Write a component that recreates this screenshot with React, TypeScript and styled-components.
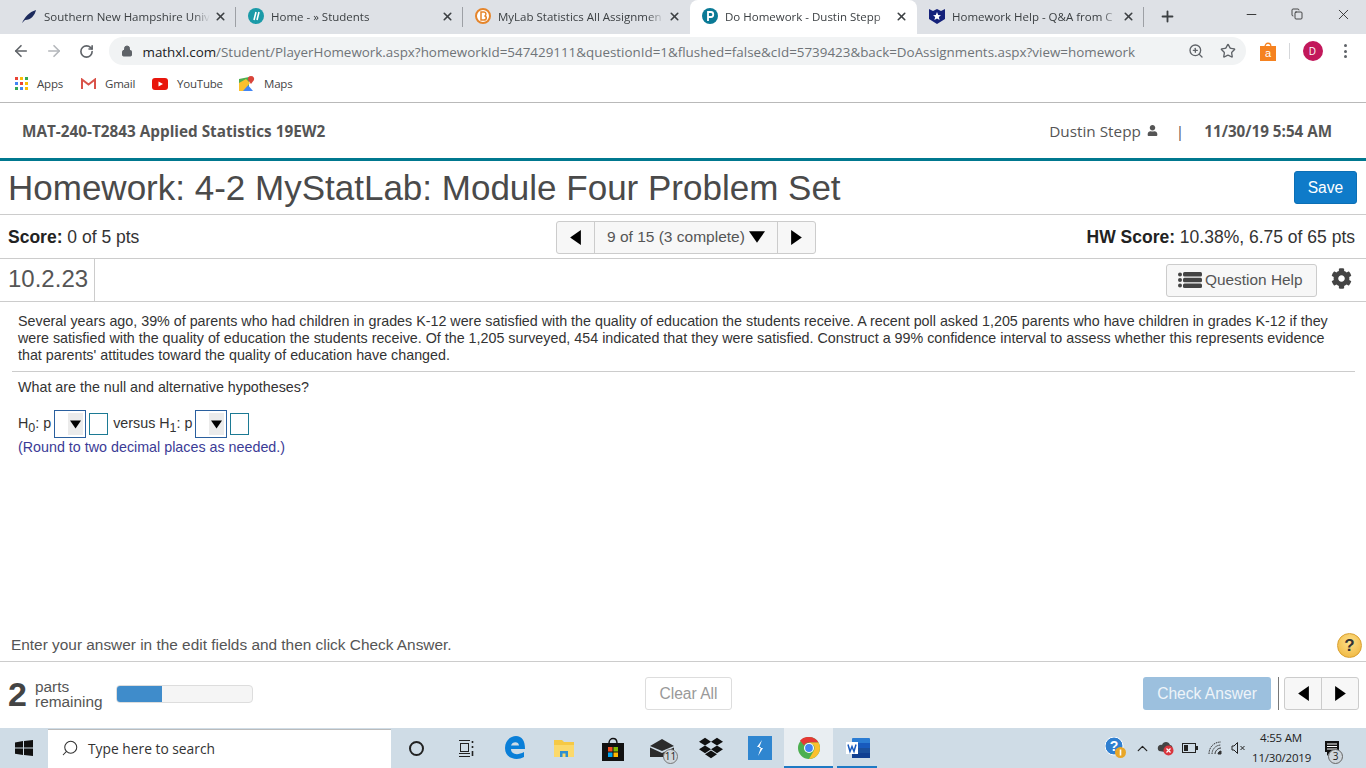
import React from 'react';
import styled, { createGlobalStyle } from 'styled-components';
import { ArrowLeft, ArrowRight, RotateCw, Lock, ZoomIn, Star, X, Plus, Minus, Copy, ChevronUp, Search } from 'lucide-react';
import { FaUser, FaCog, FaDropbox } from 'react-icons/fa';

const GlobalStyle = createGlobalStyle`
  html, body { margin: 0; padding: 0; background: #fff; }
  body { width: 1366px; height: 768px; overflow: hidden; font-family: "Liberation Sans", Arial, sans-serif; }
  * { box-sizing: border-box; }
`;

const Triangle = ({ dir, size = 15 }: { dir: 'left' | 'right' | 'down'; size?: number }) => {
  const pts = dir === 'left' ? '12,0 12,14 2,7' : dir === 'right' ? '2,0 2,14 12,7' : '0,2 14,2 7,12';
  return (
    <svg width={size} height={size} viewBox="0 0 14 14" fill="#000">
      <polygon points={pts} />
    </svg>
  );
};

const tabs = [
  { title: 'Southern New Hampshire Univ', icon: 'quill', sep: true },
  { title: 'Home - » Students', icon: 'home', sep: true },
  { title: 'MyLab Statistics All Assignmen', icon: 'brightspace' },
  { title: 'Do Homework - Dustin Stepp', icon: 'pearson', active: true },
  { title: 'Homework Help - Q&A from C', icon: 'shield', sep: true },
];

const Favicon = ({ kind }: { kind: string }) => {
  if (kind === 'quill')
    return (
      <svg width="16" height="16" viewBox="0 0 16 16">
        <path d="M1 15 C4 9 8 4 15 2 C14 7 10 12 4 12 L1 15Z" fill="#1c2a5c" />
      </svg>
    );
  if (kind === 'home')
    return (
      <svg width="16" height="16" viewBox="0 0 16 16">
        <circle cx="8" cy="8" r="8" fill="#1a9aa8" />
        <path d="M6 12 L8 4 M9 12 L11 4" stroke="#fff" strokeWidth="1.6" />
      </svg>
    );
  if (kind === 'brightspace')
    return (
      <svg width="16" height="16" viewBox="0 0 16 16">
        <circle cx="8" cy="8" r="7" fill="#fff" stroke="#e5852b" strokeWidth="2" />
        <path d="M6 4 H9 C11.5 4 11.5 7.6 9.5 8 C12 8.4 12 12 9 12 H6 Z" fill="none" stroke="#e5852b" strokeWidth="1.5" />
      </svg>
    );
  if (kind === 'pearson')
    return (
      <svg width="16" height="16" viewBox="0 0 16 16">
        <circle cx="8" cy="8" r="8" fill="#0a7a96" />
        <path d="M6 13 V4 H9 C12 4 12 9 9 9 H6" fill="none" stroke="#fff" strokeWidth="1.8" />
      </svg>
    );
  return (
    <svg width="16" height="16" viewBox="0 0 16 16">
      <path d="M0 1 L4 3 L8 1 L12 3 L16 1 V11 L8 16 L0 11Z" fill="#14217a" />
      <polygon points="8,4 9.2,7 12,7.2 9.8,9 10.6,12 8,10.4 5.4,12 6.2,9 4,7.2 6.8,7" fill="#fff" />
    </svg>
  );
};

const AppsGrid = () => {
  const colors = ['#ea4335', '#fbbc05', '#34a853', '#4285f4', '#ea4335', '#fbbc05', '#34a853', '#4285f4', '#fbbc05'];
  return (
    <svg width="13" height="13" viewBox="0 0 13 13">
      {colors.map((c, i) => (
        <rect key={i} x={(i % 3) * 5} y={Math.floor(i / 3) * 5} width="3" height="3" fill={c} />
      ))}
    </svg>
  );
};

const GmailIcon = () => (
  <svg width="15" height="12" viewBox="0 0 15 12">
    <path d="M1 11 V1.5 L7.5 6.5 L14 1.5 V11" fill="none" stroke="#d9534a" strokeWidth="2" />
  </svg>
);

const YoutubeIcon = () => (
  <svg width="16" height="12" viewBox="0 0 16 12">
    <rect width="16" height="12" rx="3" fill="#e8160c" />
    <polygon points="6.5,3.4 11,6 6.5,8.6" fill="#fff" />
  </svg>
);

const MapsIcon = () => (
  <svg width="16" height="16" viewBox="0 0 16 16">
    <path d="M0 3 L10 1 V15 L0 15Z" fill="#4caf50" />
    <path d="M0 15 L8 8 L14 15Z" fill="#4285f4" />
    <path d="M0 7 L7 3 L11 7 L4 15 L0 15Z" fill="#fbc02d" />
    <path d="M12 0 C9.5 0 8.5 2 9 4 L12 8 L15 4 C15.5 2 14.5 0 12 0Z" fill="#d9453a" />
  </svg>
);

const ShoppingBag = () => (
  <svg width="16" height="19" viewBox="0 0 16 19">
    <path d="M5 5 C5 0 11 0 11 5" fill="none" stroke="#f58220" strokeWidth="1.3" />
    <rect x="0" y="4" width="16" height="15" fill="#f58220" />
    <text x="8" y="15" fontSize="11" textAnchor="middle" fill="#fff" fontFamily="Liberation Sans">a</text>
  </svg>
);

const WindowsLogo = () => (
  <svg width="18" height="16" viewBox="0 0 18 16" fill="#111">
    <path d="M0 2.4 L8 1 V7.5 H0Z M9 .9 L18 0 V7.5 H9Z M0 8.5 H8 V15 L0 13.7Z M9 8.5 H18 V16 L9 15.1Z" />
  </svg>
);

const TaskViewIcon = () => (
  <svg width="16" height="17" viewBox="0 0 16 17" fill="none" stroke="#222">
    <path d="M1 .5 H12 M1 16.5 H12 M1 13.5 H12" />
    <rect x="2.5" y="3.5" width="8" height="8" />
    <path d="M14.5 1 V3 M14.5 6 V8 M14.5 11 V16" strokeWidth="1.6" />
  </svg>
);

const EdgeIcon = () => (
  <svg width="22" height="24" viewBox="0 0 22 24">
    <path d="M1 12 C1 4 7 0 12 0 C18 0 21 5 21 13 H7 C7 18 13 20 20 16 V21 C13 25 1 23 1 12Z M7 9.5 H15 C15 5 8 5 7 9.5Z" fill="#0a7fd8" fillRule="evenodd" />
  </svg>
);

const FolderIcon = () => (
  <svg width="20" height="17" viewBox="0 0 20 17">
    <path d="M0 0 H8 L10 2 H20 V16 H0Z" fill="#f6c945" />
    <rect x="0" y="5" width="20" height="12" fill="#fbd96b" />
    <path d="M6 17 V11 H14 V17 H11.5 V13.5 H8.5 V17Z" fill="#2f8fd0" />
  </svg>
);

const StoreIcon = () => (
  <svg width="22" height="25" viewBox="0 0 22 25">
    <path d="M7 7 C7 1 15 1 15 7" fill="none" stroke="#111" strokeWidth="1.4" />
    <rect x="0" y="7" width="22" height="18" fill="#111" />
    <rect x="6" y="11" width="4.5" height="4.5" fill="#f25022" />
    <rect x="11.5" y="11" width="4.5" height="4.5" fill="#7fba00" />
    <rect x="6" y="16.5" width="4.5" height="4.5" fill="#00a4ef" />
    <rect x="11.5" y="16.5" width="4.5" height="4.5" fill="#ffb900" />
  </svg>
);

const MailIcon = () => (
  <svg width="24" height="18" viewBox="0 0 24 18">
    <path d="M0 7 L12 0 L24 7 L12 12Z" fill="#2b2b2b" />
    <path d="M0 8.5 L12 14 L24 8.5 V18 H0Z" fill="#2b2b2b" />
  </svg>
);

const ChromeIcon = () => (
  <svg width="22" height="22" viewBox="0 0 22 22">
    <circle cx="11" cy="11" r="11" fill="#4caf50" />
    <path d="M11 0 A11 11 0 0 1 20.5 5.5 L11 5.5 A5.5 5.5 0 0 0 6 8.5 L2 3.5 A11 11 0 0 1 11 0Z" fill="#e53935" />
    <path d="M20.5 5.5 A11 11 0 0 1 11 22 L15.8 13.7 A5.5 5.5 0 0 0 15.8 8.3 L11 5.5Z" fill="#fbc02d" />
    <circle cx="11" cy="11" r="5" fill="#fff" />
    <circle cx="11" cy="11" r="3.9" fill="#4285f4" />
  </svg>
);

const WordIcon = () => (
  <svg width="24" height="20" viewBox="0 0 24 20">
    <rect x="6" y="0" width="18" height="20" rx="1" fill="#2b7cd3" />
    <rect x="6" y="5" width="18" height="5" fill="#185abd" />
    <rect x="6" y="10" width="18" height="5" fill="#1a4f9c" />
    <rect x="6" y="15" width="18" height="5" fill="#103f91" />
    <rect x="0" y="4" width="12" height="12" fill="#fff" />
    <path d="M2 6.5 L4 13.5 L6 8.5 L8 13.5 L10 6.5" fill="none" stroke="#185abd" strokeWidth="1.5" />
  </svg>
);

const HelpTrayIcon = () => (
  <svg width="22" height="22" viewBox="0 0 22 22">
    <circle cx="9" cy="9" r="9" fill="#2f7fd0" stroke="#fff" />
    <text x="9" y="14" fontSize="14" fontWeight="700" textAnchor="middle" fill="#fff" fontFamily="Liberation Sans">?</text>
    <circle cx="15.5" cy="15.5" r="5.5" fill="#e8a628" />
    <rect x="14.7" y="12.5" width="1.6" height="6" fill="#fff" />
  </svg>
);

const CloudTrayIcon = () => (
  <svg width="18" height="16" viewBox="0 0 18 16">
    <path d="M2 11 C-1 8 2 4 5 5 C6 1 12 1 13 5 C15 5 16 7 15 9 L8 12Z" fill="#444" />
    <circle cx="11.5" cy="10.5" r="5" fill="#d9363e" />
    <path d="M9.5 8.5 L13.5 12.5 M13.5 8.5 L9.5 12.5" stroke="#fff" strokeWidth="1.2" />
  </svg>
);

const BatteryTrayIcon = () => (
  <svg width="16" height="10" viewBox="0 0 16 10">
    <rect x=".5" y=".5" width="13" height="9" fill="none" stroke="#222" />
    <rect x="2" y="2" width="4" height="6" fill="#222" />
    <rect x="14" y="3" width="2" height="4" fill="#222" />
  </svg>
);

const WifiTrayIcon = () => (
  <svg width="14" height="14" viewBox="0 0 14 14" fill="none" stroke="#333">
    <path d="M1 13 C1 6 6 1 13 1" strokeDasharray="1.5 .8" />
    <path d="M4 13 C4 8 8 4 13 4" strokeDasharray="1.5 .8" />
    <path d="M7 13 C7 10 10 7 13 7" />
    <path d="M10 13 C10 11.5 11.5 10 13 10 V13Z" fill="#333" />
  </svg>
);

const SpeakerTrayIcon = () => (
  <svg width="15" height="14" viewBox="0 0 15 14" fill="none" stroke="#222">
    <path d="M1 5 H3 L6.5 1.5 V12.5 L3 9 H1Z" />
    <path d="M9.5 5 L13.5 9 M13.5 5 L9.5 9" />
  </svg>
);

const NotificationIcon = () => (
  <svg width="14" height="15" viewBox="0 0 14 15">
    <path d="M0 0 H14 V11 H5 L2 15 V11 H0Z" fill="#111" />
    <path d="M2 3 H12 M2 5.5 H12 M2 8 H12" stroke="#fff" />
  </svg>
);

const ListIcon = () => (
  <svg width="24" height="16" viewBox="0 0 24 16" fill="#444">
    <circle cx="2" cy="2.5" r="2" />
    <circle cx="2" cy="8" r="2" />
    <circle cx="2" cy="13.5" r="2" />
    <rect x="5" y="0" width="19" height="4.6" rx="1.5" />
    <rect x="5" y="5.7" width="19" height="4.6" rx="1.5" />
    <rect x="5" y="11.4" width="19" height="4.6" rx="1.5" />
  </svg>
);

const AnswerSelect = () => (
  <SelectFrame>
    <SelectButton>
      <Triangle dir="down" size={11} />
    </SelectButton>
  </SelectFrame>
);

function App() {
  return (
    <Page>
      <GlobalStyle />
      <TabStrip>
        {tabs.map((t) => (
          <Tab key={t.title} $active={t.active} $sep={t.sep}>
            <TabIconBox>
              <Favicon kind={t.icon} />
            </TabIconBox>
            <TabTitle>{t.title}</TabTitle>
            <TabClose>
              <X size={13} strokeWidth={3} />
            </TabClose>
          </Tab>
        ))}
        <NewTab>
          <Plus size={17} strokeWidth={2.6} />
        </NewTab>
        <WindowControls>
          <WindowButton>
            <Minus size={15} strokeWidth={1.4} />
          </WindowButton>
          <WindowButton>
            <Copy size={12} strokeWidth={1.6} />
          </WindowButton>
          <WindowButton>
            <X size={17} strokeWidth={1.2} />
          </WindowButton>
        </WindowControls>
      </TabStrip>

      <Toolbar>
        <NavButton>
          <ArrowLeft size={18} color="#5f6368" strokeWidth={2.2} />
        </NavButton>
        <NavButton>
          <ArrowRight size={18} color="#b4b7bb" strokeWidth={2.2} />
        </NavButton>
        <NavButton>
          <RotateCw size={15} color="#5f6368" strokeWidth={2.6} />
        </NavButton>
        <UrlPill>
          <Lock size={12} color="#5f6368" fill="#5f6368" />
          <UrlText>
            <b>mathxl.com</b>/Student/PlayerHomework.aspx?homeworkId=547429111&amp;questionId=1&amp;flushed=false&amp;cId=5739423&amp;back=DoAssignments.aspx?view=homework
          </UrlText>
          <ZoomIn size={16} color="#5f6368" />
          <Star size={16} color="#5f6368" />
        </UrlPill>
        <BagBox>
          <ShoppingBag />
        </BagBox>
        <ToolbarSep />
        <Avatar>D</Avatar>
        <MenuDots>
          <i />
          <i />
          <i />
        </MenuDots>
      </Toolbar>

      <Bookmarks>
        <Bookmark $w={66}>
          <AppsGrid />
          Apps
        </Bookmark>
        <Bookmark $w={71}>
          <GmailIcon />
          Gmail
        </Bookmark>
        <Bookmark $w={87}>
          <YoutubeIcon />
          YouTube
        </Bookmark>
        <Bookmark $w={60}>
          <MapsIcon />
          Maps
        </Bookmark>
      </Bookmarks>

      <CourseBar>
        <CourseName>MAT-240-T2843 Applied Statistics 19EW2</CourseName>
        <UserInfo>
          Dustin Stepp <FaUser size={11} color="#555" />
          <UserSep>|</UserSep>
          <DateText>11/30/19 5:54 AM</DateText>
        </UserInfo>
      </CourseBar>

      <TitleRow>
        <Title>Homework: 4-2 MyStatLab: Module Four Problem Set</Title>
        <SaveButton>Save</SaveButton>
      </TitleRow>

      <ScoreRow>
        <ScoreText>
          <b>Score:</b> 0 of 5 pts
        </ScoreText>
        <Pager>
          <PagerArrow>
            <Triangle dir="left" />
          </PagerArrow>
          <PagerLabel>
            9 of 15 (3 complete) <Triangle dir="down" size={16} />
          </PagerLabel>
          <PagerArrow>
            <Triangle dir="right" />
          </PagerArrow>
        </Pager>
        <ScoreText>
          <b>HW Score:</b> 10.38%, 6.75 of 65 pts
        </ScoreText>
      </ScoreRow>

      <QuestionBar>
        <QuestionNumber>10.2.23</QuestionNumber>
        <HelpButton>
          <ListIcon />
          Question Help
        </HelpButton>
        <GearBox>
          <FaCog size={21} color="#444" />
        </GearBox>
      </QuestionBar>

      <Content>
        <Paragraph>
          Several years ago, 39% of parents who had children in grades K-12 were satisfied with the quality of education the students receive. A recent poll asked 1,205 parents who have children in grades K-12 if they were satisfied with the quality of education the students receive. Of the 1,205 surveyed, 454 indicated that they were satisfied. Construct a 99% confidence interval to assess whether this represents evidence that parents' attitudes toward the quality of education have changed.
        </Paragraph>
        <Rule />
        <Prompt>What are the null and alternative hypotheses?</Prompt>
        <AnswerRow>
          <span>
            H<sub>0</sub>: p
          </span>
          <AnswerSelect />
          <AnswerInput />
          <span>
            versus H<sub>1</sub>: p
          </span>
          <AnswerSelect />
          <AnswerInput />
        </AnswerRow>
        <Hint>(Round to two decimal places as needed.)</Hint>
      </Content>

      <InstructionRow>
        <Instruction>Enter your answer in the edit fields and then click Check Answer.</Instruction>
        <HelpBall>?</HelpBall>
      </InstructionRow>

      <BottomBar>
        <PartsCount>2</PartsCount>
        <PartsLabel>
          parts
          <br />
          remaining
        </PartsLabel>
        <Progress>
          <ProgressFill style={{ width: `${(46 / 137) * 100}%` }} />
        </Progress>
        <ClearAll>Clear All</ClearAll>
        <CheckAnswer>Check Answer</CheckAnswer>
        <BottomSep />
        <BottomPager>
          <BottomArrow>
            <Triangle dir="left" />
          </BottomArrow>
          <BottomArrow>
            <Triangle dir="right" />
          </BottomArrow>
        </BottomPager>
      </BottomBar>

      <Taskbar>
        <StartButton>
          <WindowsLogo />
        </StartButton>
        <SearchBox>
          <Search size={18} strokeWidth={1.4} style={{ transform: 'scaleX(-1)' }} />
          Type here to search
        </SearchBox>
        <TaskSlot>
          <CortanaRing />
        </TaskSlot>
        <TaskSlot>
          <TaskViewIcon />
        </TaskSlot>
        <TaskSlot>
          <EdgeIcon />
        </TaskSlot>
        <TaskSlot>
          <FolderIcon />
        </TaskSlot>
        <TaskSlot>
          <StoreIcon />
        </TaskSlot>
        <TaskSlot>
          <MailIcon />
          <CountBadge>11</CountBadge>
        </TaskSlot>
        <TaskSlot>
          <FaDropbox size={24} color="#111" />
        </TaskSlot>
        <TaskSlot>
          <BlueTile>
            <svg width="8" height="16" viewBox="0 0 8 16">
              <path d="M6 0 L1 7 H5 L2 16 L7 8 H3Z" fill="#fff" />
            </svg>
          </BlueTile>
        </TaskSlot>
        <TaskSlot $active>
          <ChromeIcon />
        </TaskSlot>
        <TaskSlot $running>
          <WordIcon />
        </TaskSlot>
        <Tray>
          <TrayItem $w={28}>
            <HelpTrayIcon />
          </TrayItem>
          <TrayItem $w={24}>
            <ChevronUp size={17} strokeWidth={1.8} />
          </TrayItem>
          <TrayItem $w={24}>
            <CloudTrayIcon />
          </TrayItem>
          <TrayItem $w={24}>
            <BatteryTrayIcon />
          </TrayItem>
          <TrayItem $w={26}>
            <WifiTrayIcon />
          </TrayItem>
          <TrayItem $w={20}>
            <SpeakerTrayIcon />
          </TrayItem>
          <Clock>
            4:55 AM
            <br />
            11/30/2019
          </Clock>
          <TrayItem $w={44}>
            <NotificationIcon />
            <NotificationBadge>3</NotificationBadge>
          </TrayItem>
        </Tray>
      </Taskbar>
    </Page>
  );
}

export default App;

const Page = styled.div`
  width: 1366px;
  height: 768px;
  display: flex;
  flex-direction: column;
  overflow: hidden;
  color: #333;
`;
const TabStrip = styled.div`
  height: 34px;
  flex: none;
  background: #dee1e6;
  display: flex;
  padding-left: 9px;
  font-family: "Open Sans", sans-serif;
`;
const Tab = styled.div<{ $active?: boolean; $sep?: boolean }>`
  position: relative;
  width: 227px;
  height: 34px;
  display: flex;
  align-items: center;
  padding: 0 6px 0 12px;
  background: ${(p) => (p.$active ? '#fff' : 'transparent')};
  border-radius: ${(p) => (p.$active ? '8px 8px 0 0' : '0')};
  &::after {
    content: '';
    display: ${(p) => (p.$sep ? 'block' : 'none')};
    position: absolute;
    right: 0;
    top: 7px;
    width: 1px;
    height: 20px;
    background: #9da0a5;
  }
`;
const TabIconBox = styled.span`
  width: 23px;
  flex: none;
  display: flex;
  align-items: center;
  padding-bottom: 2px;
`;
const TabTitle = styled.span`
  flex: 1;
  padding-bottom: 2px;
  font-size: 11.5px;
  white-space: nowrap;
  color: #3c4043;
  mask-image: linear-gradient(90deg, #000 90%, transparent);
`;
const TabClose = styled.span`
  width: 20px;
  flex: none;
  display: flex;
  justify-content: center;
  padding-bottom: 2px;
  color: #3c4043;
`;
const NewTab = styled.div`
  width: 46px;
  display: flex;
  align-items: center;
  justify-content: center;
  padding-bottom: 2px;
  color: #3c4043;
`;
const WindowControls = styled.div`
  margin-left: auto;
  display: flex;
  height: 28px;
  color: #222;
`;
const WindowButton = styled.div`
  width: 46px;
  display: flex;
  align-items: center;
  justify-content: center;
`;
const Toolbar = styled.div`
  height: 34px;
  flex: none;
  display: flex;
  align-items: center;
  padding-left: 5px;
`;
const NavButton = styled.div`
  width: 32.5px;
  display: flex;
  justify-content: center;
`;
const UrlPill = styled.div`
  width: 1137px;
  height: 28px;
  margin-left: 6px;
  background: #f1f3f4;
  border-radius: 14px;
  display: flex;
  align-items: center;
  gap: 16px;
  padding: 0 10px 0 12px;
`;
const UrlText = styled.span`
  flex: 1;
  margin-left: -6px;
  padding-top: 1px;
  font-family: "Open Sans", sans-serif;
  font-size: 13.4px;
  color: #6f7478;
  white-space: nowrap;
  b {
    font-weight: 400;
    color: #202124;
  }
`;
const BagBox = styled.div`
  width: 16px;
  height: 19px;
  margin-left: 14px;
`;
const ToolbarSep = styled.div`
  width: 1px;
  height: 16px;
  margin-left: 13px;
  background: #d5d7da;
`;
const Avatar = styled.div`
  width: 20px;
  height: 20px;
  margin-left: 13px;
  border-radius: 50%;
  background: #c2185b;
  color: #fff;
  font: 10px/20px "Open Sans", sans-serif;
  text-align: center;
`;
const MenuDots = styled.div`
  margin-left: 21px;
  display: flex;
  flex-direction: column;
  gap: 2.5px;
  i {
    width: 3px;
    height: 3px;
    border-radius: 50%;
    background: #5f6368;
  }
`;
const Bookmarks = styled.div`
  height: 35px;
  flex: none;
  display: flex;
  align-items: center;
  padding: 0 0 3px 15px;
  border-bottom: 1px solid #b9b9b9;
`;
const Bookmark = styled.div<{ $w: number }>`
  width: ${(p) => p.$w}px;
  display: flex;
  align-items: center;
  gap: 9px;
  font-family: "Open Sans", sans-serif;
  font-size: 11.5px;
  letter-spacing: -0.2px;
  color: #444;
`;
const CourseBar = styled.div`
  height: 58px;
  flex: none;
  display: flex;
  align-items: center;
  justify-content: space-between;
  padding: 0 34px 0 22px;
  font-family: "Open Sans", sans-serif;
  color: #555;
  border-bottom: 3px solid #00788f;
`;
const CourseName = styled.div`
  font-size: 15.3px;
  font-weight: 700;
`;
const UserInfo = styled.div`
  display: flex;
  align-items: center;
  gap: 6px;
  font-size: 15.3px;
`;
const UserSep = styled.span`
  margin: 0 14px 0 12px;
`;
const DateText = styled.span`
  font-size: 15.2px;
  font-weight: 700;
`;
const TitleRow = styled.div`
  height: 54px;
  flex: none;
  display: flex;
  align-items: center;
  justify-content: space-between;
  padding: 0 9px 0 8px;
  border-bottom: 1px solid #ccc;
`;
const Title = styled.h1`
  margin: 1px 0 0;
  font-size: 35px;
  font-weight: 400;
  color: #4a4a4a;
`;
const SaveButton = styled.button`
  width: 63px;
  height: 33px;
  padding: 0;
  border: 1px solid #0c6fb5;
  border-radius: 3px;
  background: #0f7bc9;
  color: #fff;
  font: 15.6px "Liberation Sans", sans-serif;
`;
const ScoreRow = styled.div`
  height: 44px;
  flex: none;
  display: flex;
  align-items: center;
  justify-content: space-between;
  padding: 1px 11px 0 8px;
  border-bottom: 1px solid #ccc;
`;
const ScoreText = styled.div`
  font-size: 17.5px;
  color: #333;
  b {
    color: #222;
  }
`;
const Pager = styled.div`
  width: 260px;
  height: 33px;
  display: flex;
  border: 1px solid #ccc;
  border-radius: 3px;
  background: #f7f7f7;
  margin-left: 146px;
`;
const PagerArrow = styled.div`
  width: 37px;
  display: flex;
  align-items: center;
  justify-content: center;
`;
const PagerLabel = styled.div`
  flex: 1;
  display: flex;
  align-items: center;
  justify-content: center;
  gap: 4px;
  font-size: 15.5px;
  color: #555;
  border-left: 1px solid #ccc;
  border-right: 1px solid #ccc;
`;
const QuestionBar = styled.div`
  height: 43px;
  flex: none;
  display: flex;
  align-items: center;
  border-bottom: 1px solid #ccc;
`;
const QuestionNumber = styled.div`
  width: 95px;
  height: 100%;
  padding-left: 8px;
  font-size: 24px;
  line-height: 40px;
  color: #555;
  border-right: 1px solid #ccc;
`;
const HelpButton = styled.div`
  width: 151px;
  height: 33px;
  margin-left: auto;
  display: flex;
  align-items: center;
  gap: 3px;
  padding-left: 11px;
  border: 1px solid #ccc;
  border-radius: 3px;
  background: #f7f7f7;
  font-size: 15.4px;
  color: #555;
`;
const GearBox = styled.div`
  width: 49px;
  display: flex;
  justify-content: center;
  padding-bottom: 3px;
`;
const Content = styled.div`
  flex: 1;
  padding: 11px 11px 0 12px;
  font-size: 14.3px;
  color: #333;
`;
const Paragraph = styled.p`
  margin: 0;
  padding: 0 10px 0 6px;
  line-height: 17px;
`;
const Rule = styled.hr`
  margin: 7px 0 0;
  border: 0;
  border-top: 1px solid #ccc;
`;
const Prompt = styled.p`
  margin: 8px 0 0 6px;
  line-height: 15px;
`;
const AnswerRow = styled.div`
  margin: 15px 0 0 6px;
  height: 28px;
  display: flex;
  align-items: center;
  gap: 3px;
  sub {
    font-size: 12.5px;
    line-height: 0;
  }
  span {
    margin-top: -2px;
    white-space: pre;
  }
`;
const SelectFrame = styled.div`
  width: 32px;
  height: 28px;
  border: 1px solid #2a5f9e;
  display: flex;
  align-items: center;
  justify-content: flex-end;
  padding-right: 2px;
`;
const SelectButton = styled.div`
  width: 15px;
  height: 22px;
  background: #ebebeb;
  display: flex;
  align-items: center;
  justify-content: center;
`;
const AnswerInput = styled.div`
  width: 19px;
  height: 22px;
  margin-right: 2px;
  border: 1px solid #1c7a94;
  background: #fff;
`;
const Hint = styled.div`
  margin: 1px 0 0 6px;
  line-height: 16px;
  color: #3b3b96;
`;
const InstructionRow = styled.div`
  height: 33px;
  flex: none;
  display: flex;
  align-items: center;
  justify-content: space-between;
  padding: 0 4px 0 11px;
  border-bottom: 1px solid #ccc;
`;
const Instruction = styled.div`
  font-size: 15.4px;
  color: #555;
`;
const HelpBall = styled.div`
  width: 25px;
  height: 25px;
  margin-top: 1px;
  border-radius: 50%;
  background: radial-gradient(circle at 50% 35%, #fde08a, #eeb135);
  border: 1px solid #d9a030;
  color: #333;
  font: 700 17px/23px "Liberation Sans", sans-serif;
  text-align: center;
`;
const BottomBar = styled.div`
  height: 66px;
  flex: none;
  display: flex;
  align-items: center;
  padding: 0 7px 3px 8px;
`;
const PartsCount = styled.div`
  width: 27px;
  margin-top: 2px;
  font-size: 34px;
  font-weight: 700;
  color: #444;
`;
const PartsLabel = styled.div`
  width: 81px;
  font-size: 15.4px;
  line-height: 15px;
  color: #555;
`;
const Progress = styled.div`
  width: 137px;
  height: 18px;
  border: 1px solid #ddd;
  border-radius: 4px;
  background: #f5f5f5;
  overflow: hidden;
`;
const ProgressFill = styled.div`
  height: 100%;
  background: #3f8ccb;
`;
const ClearAll = styled.div`
  width: 87px;
  height: 33px;
  margin-left: 392px;
  border: 1px solid #ddd;
  border-radius: 3px;
  font-size: 15.6px;
  line-height: 31px;
  text-align: center;
  color: #999;
`;
const CheckAnswer = styled.div`
  width: 128px;
  height: 33px;
  margin-left: auto;
  border-radius: 3px;
  background: #9cc0de;
  color: #eef4f9;
  font-size: 15.6px;
  line-height: 33px;
  text-align: center;
`;
const BottomSep = styled.div`
  width: 1px;
  height: 33px;
  margin: 0 5px 0 7px;
  background: #777;
`;
const BottomPager = styled.div`
  width: 75px;
  height: 33px;
  display: flex;
  border: 1px solid #ccc;
  border-radius: 3px;
  background: #f7f7f7;
`;
const BottomArrow = styled.div`
  flex: 1;
  display: flex;
  align-items: center;
  justify-content: center;
  & + & {
    border-left: 1px solid #ccc;
  }
`;
const Taskbar = styled.div`
  height: 40px;
  flex: none;
  display: flex;
  align-items: stretch;
  background: #cfdce6;
  font-family: "Open Sans", sans-serif;
`;
const StartButton = styled.div`
  width: 48px;
  display: flex;
  align-items: center;
  justify-content: center;
`;
const SearchBox = styled.div`
  width: 343px;
  margin-top: 1px;
  margin-right: 1px;
  background: #fff;
  border-top: 1px solid #bbb;
  display: flex;
  align-items: center;
  gap: 9px;
  padding: 0 0 2px 13px;
  font-size: 13.8px;
  color: #333;
`;
const TaskSlot = styled.div<{ $running?: boolean; $active?: boolean }>`
  position: relative;
  width: 49px;
  display: flex;
  align-items: center;
  justify-content: center;
  background: ${(p) => (p.$active ? '#e9eef2' : 'transparent')};
  &::after {
    content: '';
    display: ${(p) => (p.$running || p.$active ? 'block' : 'none')};
    position: absolute;
    bottom: 0;
    left: ${(p) => (p.$active ? 0 : 4)}px;
    right: ${(p) => (p.$active ? 0 : 5)}px;
    height: 2px;
    background: #1f7ac4;
  }
`;
const CortanaRing = styled.div`
  width: 15px;
  height: 15px;
  border: 2.5px solid #222;
  border-radius: 50%;
`;
const CountBadge = styled.span`
  position: absolute;
  right: 8px;
  bottom: 4px;
  width: 15px;
  height: 15px;
  border: 1px solid #777;
  border-radius: 50%;
  background: #cfd6dc;
  font: 10px/13px "Open Sans", sans-serif;
  text-align: center;
  color: #222;
`;
const BlueTile = styled.div`
  width: 24px;
  height: 24px;
  background: #2f86d0;
  display: flex;
  align-items: center;
  justify-content: center;
`;
const Tray = styled.div`
  margin-left: auto;
  display: flex;
  align-items: center;
  padding-right: 12px;
  color: #222;
`;
const TrayItem = styled.div<{ $w: number }>`
  position: relative;
  width: ${(p) => p.$w}px;
  display: flex;
  align-items: center;
  justify-content: center;
`;
const Clock = styled.div`
  width: 58px;
  margin-left: 4px;
  font-size: 11.5px;
  line-height: 20px;
  letter-spacing: -0.2px;
  text-align: center;
  white-space: nowrap;
  color: #222;
`;
const NotificationBadge = styled.span`
  position: absolute;
  right: 11px;
  bottom: -8px;
  width: 15px;
  height: 15px;
  border: 1px solid #666;
  border-radius: 50%;
  background: #cfd6dc;
  font-size: 10px;
  line-height: 13px;
  text-align: center;
`;
